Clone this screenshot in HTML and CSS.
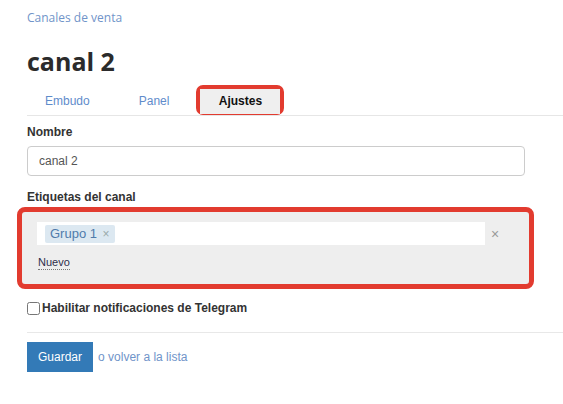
FILE: index.html
```html
<!DOCTYPE html>
<html lang="es">
<head>
    <meta charset="UTF-8">
    <meta name="viewport" content="width=device-width, initial-scale=1.0">
    <title>canal 2 - Ajustes</title>
    <link rel="stylesheet" href="styles.css">
</head>
<body>
    <div class="page">
        <a class="breadcrumb" href="#">Canales de venta</a>
        <h1 class="title">canal 2</h1>

        <ul class="tabs">
            <li class="tab"><a href="#">Embudo</a></li>
            <li class="tab"><a href="#">Panel</a></li>
            <li class="tab active highlight"><a href="#">Ajustes</a></li>
        </ul>

        <form class="form">
            <label class="field-label" for="name">Nombre</label>
            <input class="text-input" id="name" type="text" value="canal 2">

            <label class="field-label tags-label">Etiquetas del canal</label>
            <div class="tags-box highlight">
                <div class="tags-row">
                    <div class="tags-input">
                        <span class="tag">Grupo 1 <span class="tag-remove">×</span></span>
                    </div>
                    <span class="tags-clear">×</span>
                </div>
                <a class="new-link" href="#">Nuevo</a>
            </div>

            <label class="check-row">
                <input type="checkbox" class="check">
                <span>Habilitar notificaciones de Telegram</span>
            </label>

            <hr class="divider">

            <div class="actions">
                <button type="button" class="btn-save">Guardar</button>
                <a class="back-link" href="#">o volver a la lista</a>
            </div>
        </form>
    </div>
</body>
</html>
```

FILE: styles.css
```css
body {
    margin: 0;
    font-family: 'Liberation Sans', Arial, sans-serif;
    font-size: 12px;
    color: #333;
    background: #fff;
}

a {
    text-decoration: none;
}

.page {
    padding: 10px 0 0 27px;
}

.breadcrumb {
    display: block;
    font-family: 'Open Sans', sans-serif;
    font-size: 12px;
    line-height: 16px;
    color: #7094c9;
}

.title {
    margin: 20px 0 0;
    font-family: 'Open Sans', sans-serif;
    font-size: 25px;
    font-weight: 700;
    line-height: 30px;
    color: #2b2b2b;
}

/* pestañas */
.tabs {
    display: flex;
    gap: 13px;
    height: 30px;
    margin: 9px 0 0;
    padding: 0;
    list-style: none;
    border-bottom: 1px solid #e6e6e6;
}

.tab a {
    display: block;
    padding: 0 18px;
    line-height: 33px;
    color: #5f8ccb;
}

.tab.active {
    position: relative;
    margin-left: -4px;
}

.tab.active a {
    width: 80px;
    padding: 0;
    line-height: 25px;
    text-align: center;
    font-weight: 700;
    color: #111;
    background: #efefef;
}

.highlight {
    border: 4px solid #e23b2f;
    border-radius: 7px;
}

/* formulario */
.field-label {
    display: block;
    margin-top: 8px;
    font-weight: 700;
    line-height: 16px;
}

.text-input {
    display: block;
    box-sizing: border-box;
    width: 498px;
    height: 30px;
    margin-top: 6px;
    padding: 0 11px;
    border: 1px solid #ccc;
    border-radius: 4px;
    font-family: inherit;
    font-size: 12px;
    color: #555;
}

.tags-label {
    margin-top: 13px;
}

.tags-box {
    box-sizing: border-box;
    width: 517px;
    height: 82px;
    margin: 2px 0 0 -10px;
    padding: 10px 0 0 15px;
    border-width: 5px;
    border-radius: 8px;
    background: #eee;
}

.tags-row {
    display: flex;
    align-items: center;
    gap: 6px;
}

.tags-input {
    display: flex;
    align-items: center;
    width: 448px;
    height: 23px;
    padding-left: 8px;
    box-sizing: border-box;
    background: #fff;
}

.tag {
    padding: 0 5px;
    line-height: 18px;
    font-size: 13px;
    color: #4f7bab;
    background: #dce8f1;
    border-radius: 2px;
}

.tag-remove {
    margin-left: 2px;
    font-size: 12px;
    color: #9aa;
}

.tags-clear {
    font-size: 14px;
    color: #999;
}

.new-link {
    display: inline-block;
    margin: 10px 0 0 1px;
    font-size: 11px;
    line-height: 14px;
    color: #2d2d4a;
    border-bottom: 1px dotted #777;
}

.check-row {
    display: flex;
    align-items: center;
    gap: 2px;
    margin-top: 11px;
    font-weight: 700;
    line-height: 16px;
}

.check {
    width: 13px;
    height: 13px;
    margin: 0;
}

.divider {
    margin: 16px 0 0;
    border: 0;
    border-top: 1px solid #e8e8e8;
}

.actions {
    display: flex;
    align-items: center;
    gap: 5px;
    margin-top: 9px;
}

.btn-save {
    height: 30px;
    padding: 0 11px;
    border: none;
    font-family: inherit;
    font-size: 12px;
    color: #fff;
    background: #337ab7;
}

.back-link {
    color: #7094c9;
}
```
